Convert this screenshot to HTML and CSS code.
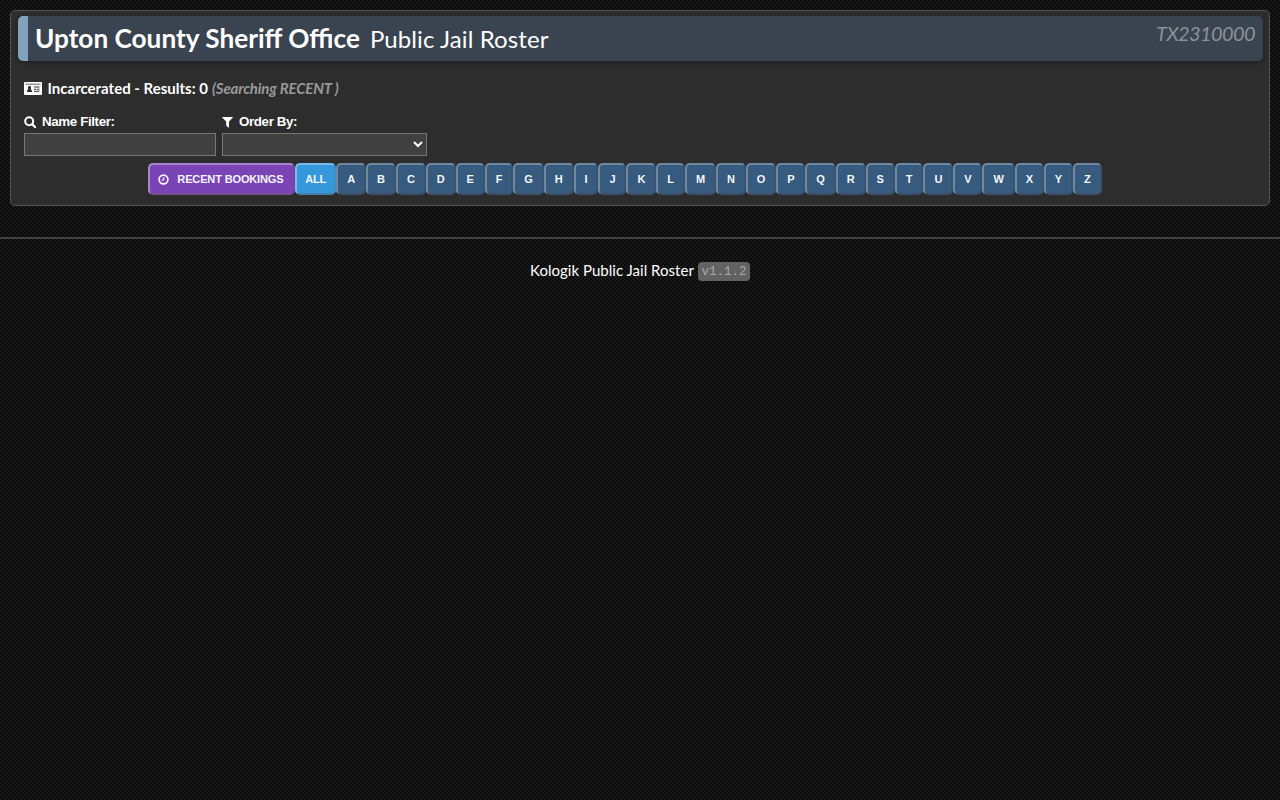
FILE: index.html
```html
<!DOCTYPE html>
<html lang="en">
<head>
<meta charset="utf-8">
<title>Public Jail Roster</title>
<link rel="stylesheet" href="styles.css">
</head>
<body>
<main class="panel">
  <header class="banner">
    <h1><span class="office">Upton County Sheriff Office</span><span class="sub">Public Jail Roster</span></h1>
    <span class="code">TX2310000</span>
  </header>
  <div class="status">
    <svg class="card" viewBox="0 0 18 13"><path fill="#fff" d="M1 0h16a1 1 0 0 1 1 1v11a1 1 0 0 1-1 1H1a1 1 0 0 1-1-1V1a1 1 0 0 1 1-1z"/><path fill="#2d2d2d" d="M1.400 1.700h15.200v.9H1.400zM3 10c0-2 .7-2.800 1.500-2.800-1.100-1.300-.7-3.200 1-3.200s2.100 1.900 1 3.200C7.300 7.200 8 8 8 10zM10 4.600h5.500v1H10zM10 6.700h2.200v1H10zM13.100 6.700h2.400v1h-2.400zM10 8.800h5.500v1H10z"/></svg>
    <span class="count">Incarcerated - Results: 0</span><em class="searching">(Searching RECENT )</em>
  </div>
  <form class="filters">
    <div class="field name">
      <label for="name"><svg class="ico" viewBox="0 0 13 13"><circle cx="5.200" cy="5.200" r="4" fill="none" stroke="#fff" stroke-width="2"/><path d="m8.300 8.300 2.700 2.700" stroke="#fff" stroke-width="2.300" stroke-linecap="round"/></svg>Name Filter:</label>
      <input id="name" type="text">
    </div>
    <div class="field order">
      <label for="order"><svg class="ico funnel" viewBox="0 0 11 12"><path fill="#fff" d="M.4 1h10.200q.5.300.1.800L7 5.600v5.700q-.3.500-.8.100L4.200 9.500V5.600L.3 1.800Q0 1.300.4 1z"/></svg>Order By:</label>
      <select id="order"><option></option></select>
    </div>
  </form>
  <nav class="letters">
    <button class="recent"><svg class="clock" viewBox="0 0 11 11"><circle cx="5.500" cy="5.500" r="4.400" fill="none" stroke="#fff" stroke-width="1.600"/><path d="M5.800 3v3H3.500" fill="none" stroke="#fff"/></svg>RECENT BOOKINGS</button><button class="all">ALL</button><button>A</button><button>B</button><button>C</button><button>D</button><button>E</button><button>F</button><button>G</button><button>H</button><button>I</button><button>J</button><button>K</button><button>L</button><button>M</button><button>N</button><button>O</button><button>P</button><button>Q</button><button>R</button><button>S</button><button>T</button><button>U</button><button>V</button><button>W</button><button>X</button><button>Y</button><button>Z</button>
  </nav>
</main>
<footer class="footer"><span>Kologik Public Jail Roster</span><code>v1.1.2</code></footer>
</body>
</html>
```

FILE: styles.css
```css
* { box-sizing: border-box; }
body {
  margin: 0;
  padding-top: 10px;
  min-height: 100vh;
  color: #fff;
  font: 15px/20px Lato, sans-serif;
  background-color: #181818;
  background-image:
    radial-gradient(circle at 1px 1px, #0b0b0b 0.800px, transparent 1.100px),
    radial-gradient(circle at 3px 3px, #0b0b0b 0.800px, transparent 1.100px);
  background-size: 4px 4px;
}
.panel {
  height: 196px;
  margin: 0 10px;
  padding: 5px 6px 0 7px;
  background: #2d2d2d;
  border: 1px solid #555;
  border-radius: 5px;
}
.banner {
  display: flex;
  justify-content: space-between;
  height: 45px;
  padding: 0 8px 0 7px;
  background: #3a4451;
  border-left: 10px solid #82a3bc;
  border-radius: 5px;
  box-shadow: 0 2px 4px rgba(0, 0, 0, .3);
}
h1 { margin: 0; line-height: 40px; font-weight: 400; white-space: nowrap; }
.office { font-size: 26.200px; font-weight: 700; }
.sub { margin-left: 10px; font-size: 24px; letter-spacing: .1px; }
.code { color: #8c9198; font-size: 20px; font-style: italic; line-height: 35px; letter-spacing: -.6px; }
.status { display: flex; align-items: center; height: 20px; margin: 17px 0 0 6px; font-weight: 700; }
.card { width: 18px; height: 13px; margin-right: 5.500px; }
.count { width: 161.500px; white-space: nowrap; }
.searching { margin-left: 3px; color: #999; letter-spacing: -.16px; }
.filters { display: flex; gap: 6px; margin: 15px 0 0 6px; }
.name { width: 192px; }
.order { width: 205px; }
.field label { display: flex; align-items: center; height: 18px; margin-bottom: 2px; font: bold 13.330px/18px "Liberation Sans", sans-serif; letter-spacing: -.37px; }
.ico { width: 13px; height: 13px; margin-right: 5px; }
.funnel { width: 11px; height: 12px; margin-right: 6px; }
.field input, .field select {
  display: block;
  width: 100%;
  height: 23px;
  color: #fff;
  background: #404040;
  border: 1px solid #777;
  border-radius: 0;
}
.letters { display: flex; justify-content: center; margin: 7px 31px 0 0; }
.letters button {
  height: 32px;
  padding: 0 9px;
  color: #f4f7fa;
  background: #375a7f;
  border: 2px solid;
  border-color: #7089a3 #3a5470 #3a5068 #7089a3;
  border-radius: 5px;
  font: bold 11px/28px "Liberation Sans", sans-serif;
  letter-spacing: -.14px;
}
.letters .recent { display: flex; align-items: center; padding: 0 9.500px 0 8px; background: #7a43b6; border-color: #a886cd #76499f #71508f #a886cd; }
.letters .all { padding: 0 8.200px; background: #3498db; border-color: #79bbe8 #438fc4 #487fa5 #79bbe8; }
.clock { width: 11px; height: 11px; margin-right: 8px; }
.footer { display: flex; justify-content: center; gap: 4px; height: 60px; margin-top: 31px; padding-top: 21px; border-top: 2px solid #404040; }
.footer span { letter-spacing: .02px; }
code { height: 19px; margin-top: 2px; padding: 0 3.500px; color: #aaa; background: #626262; border-radius: 4px; font: 12.500px/20px "Liberation Mono", monospace; }
```
